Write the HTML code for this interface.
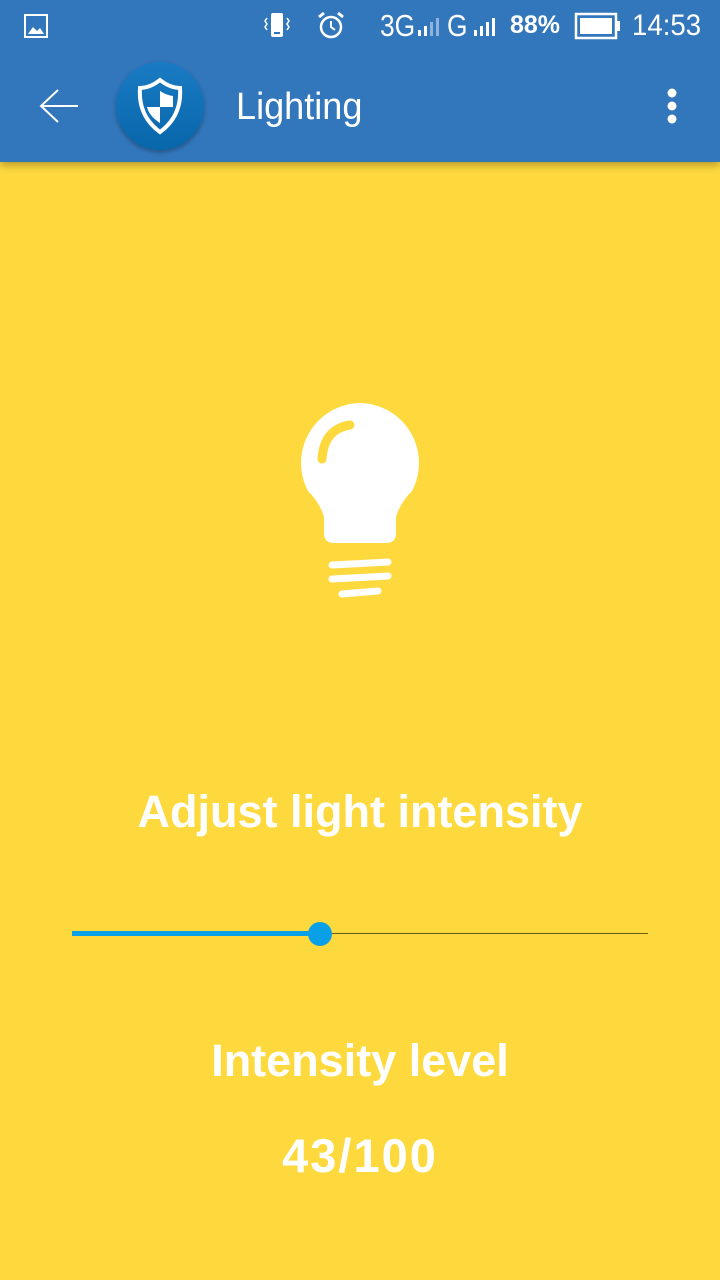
<!DOCTYPE html><html><head><style>
body{margin:0;width:720px;height:1280px;background:#FED93D;font-family:"Liberation Sans",sans-serif;position:relative;overflow:hidden}
.bar{position:absolute;left:0;top:0;width:720px;height:162px;background:#3276BB;box-shadow:0 3px 8px rgba(0,0,0,.3)}
.t{position:absolute;color:#fff}
</style></head><body>
<div class="bar">
<svg style="position:absolute;left:24px;top:14px" width="24" height="24"><rect x="1" y="1" width="22" height="22" fill="none" stroke="#fff" stroke-width="2"/><path d="M4 20 L9 13 L13 17 L16 14 L20 20Z" fill="#fff"/></svg>
<svg style="position:absolute;left:262px;top:10px" width="30" height="30"><rect x="9" y="3" width="12" height="24" rx="2" fill="#fff"/><rect x="12" y="22" width="6" height="2" fill="#3276BB"/><path d="M5 8l-2 3 2 3-2 3 2 3M25 8l2 3-2 3 2 3-2 3" stroke="#fff" fill="none" stroke-width="1.5"/></svg>
<svg style="position:absolute;left:315px;top:9px" width="32" height="32"><circle cx="16" cy="18" r="10" fill="none" stroke="#fff" stroke-width="2.5"/><path d="M16 12v6l4 3" stroke="#fff" fill="none" stroke-width="2"/><path d="M4 8l5-4M28 8l-5-4" stroke="#fff" stroke-width="3"/></svg>
<div class="t" style="left:380px;top:8px;font-size:31px;transform:scaleX(.85);transform-origin:left">3G</div>
<svg style="position:absolute;left:416px;top:16px" width="26" height="22"><rect x="2" y="14" width="3" height="6" fill="#fff"/><rect x="8" y="10" width="3" height="10" fill="#fff"/><rect x="14" y="6" width="3" height="14" fill="#8fb3dc"/><rect x="20" y="2" width="3" height="18" fill="#8fb3dc"/></svg>
<div class="t" style="left:447px;top:8px;font-size:31px;transform:scaleX(.85);transform-origin:left">G</div>
<svg style="position:absolute;left:472px;top:16px" width="26" height="22"><rect x="2" y="14" width="3" height="6" fill="#fff"/><rect x="8" y="10" width="3" height="10" fill="#fff"/><rect x="14" y="6" width="3" height="14" fill="#fff"/><rect x="20" y="2" width="3" height="18" fill="#fff"/></svg>
<div class="t" style="left:510px;top:11px;font-size:25px;font-weight:bold">88%</div>
<svg style="position:absolute;left:574px;top:12px" width="48" height="28"><rect x="2" y="2" width="40" height="24" fill="none" stroke="#fff" stroke-width="2.5"/><rect x="6" y="6" width="32" height="16" fill="#fff"/><rect x="43" y="9" width="3" height="10" fill="#fff"/></svg>
<div class="t" style="left:632px;top:9px;font-size:30px;transform:scaleX(.92);transform-origin:left">14:53</div>
<svg style="position:absolute;left:38px;top:88px" width="42" height="36"><path d="M40 18H3M20 2L3 18 20 34" stroke="#fff" fill="none" stroke-width="2"/></svg>
<div style="position:absolute;left:116px;top:62px;width:88px;height:88px;border-radius:50%;background:linear-gradient(#1a7bc4,#0866aa);box-shadow:0 2px 4px rgba(0,0,0,.3)"></div>
<svg style="position:absolute;left:134px;top:76px" width="52" height="60"><path d="M26 4 Q36 12 46 12 Q48 40 26 56 Q4 40 6 12 Q16 12 26 4Z" fill="none" stroke="#fff" stroke-width="4"/><path d="M26 15 Q32 19 39 20 L39 31 H26Z M13 31 H26 V47 Q15 40 13 31Z" fill="#fff"/></svg>
<div class="t" style="left:236px;top:86px;font-size:38px;transform:scaleX(.95);transform-origin:left">Lighting</div>
<svg style="position:absolute;left:664px;top:88px" width="16" height="38"><circle cx="8" cy="5" r="4.5" fill="#fff"/><circle cx="8" cy="18" r="4.5" fill="#fff"/><circle cx="8" cy="31" r="4.5" fill="#fff"/></svg>
</div>
<svg style="position:absolute;left:290px;top:395px" width="140" height="210"><path d="M70 8 A60 60 0 0 1 122 96 Q110 108 106 122 L106 138 Q106 148 96 148 L44 148 Q34 148 34 138 L34 122 Q30 108 18 96 A60 60 0 0 1 70 8Z" fill="#fff"/><path d="M32 64 Q34 34 60 30" stroke="#FED93D" stroke-width="9" stroke-linecap="round" fill="none"/><path d="M42 170 L98 167 M42 184 L98 181 M52 199 L88 196" stroke="#fff" stroke-width="7" stroke-linecap="round"/></svg>
<div class="t" style="left:0;width:720px;text-align:center;top:786px;font-size:45px;font-weight:bold">Adjust light intensity</div>
<div style="position:absolute;left:72px;top:933px;width:576px;height:1px;background:#6b5a20"></div>
<div style="position:absolute;left:72px;top:931px;width:248px;height:5px;background:#0AA0E8"></div>
<div style="position:absolute;left:308px;top:922px;width:24px;height:24px;border-radius:50%;background:#0AA0E8"></div>
<div class="t" style="left:0;width:720px;text-align:center;top:1035px;font-size:45px;font-weight:bold">Intensity level</div>
<div class="t" style="left:0;width:720px;text-align:center;top:1128px;font-size:47px;font-weight:bold;letter-spacing:2px">43/100</div>
</body></html>
